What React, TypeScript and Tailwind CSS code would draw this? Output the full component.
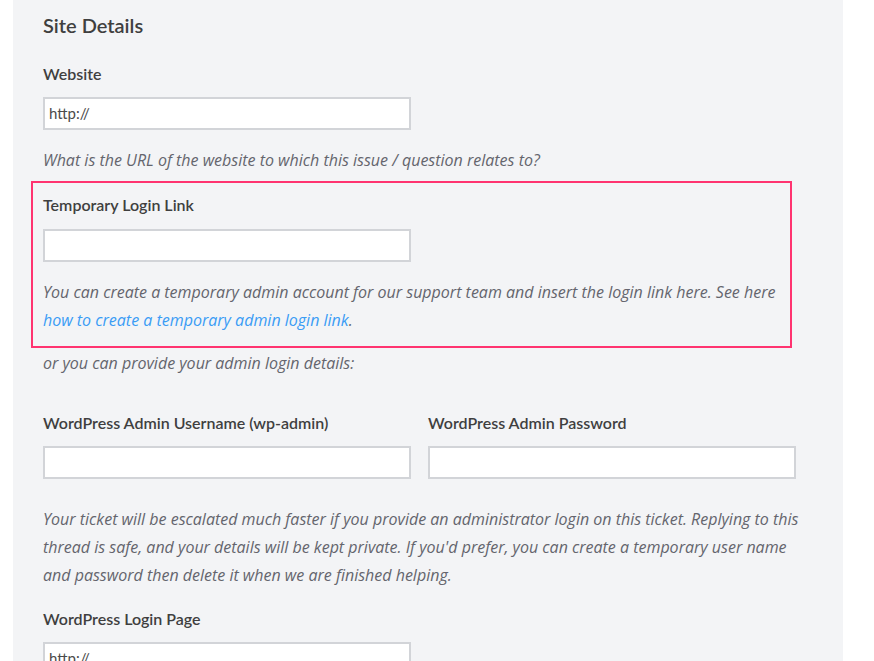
import React from "react";

const font = { fontFamily: "Lato, 'Open Sans', sans-serif" };
const helpFont = { fontFamily: "'Open Sans', Lato, sans-serif" };

function Input({ value }: { value?: string }) {
  return (
    <div className="h-[33px] w-[368px] border-2 border-[#d2d4d8] bg-white px-[4px] flex items-center text-[15px] text-[#4a4a4a]">
      {value}
    </div>
  );
}

function Label({ children }: { children: React.ReactNode }) {
  return <div className="text-[16px] leading-[20px] font-semibold text-[#3f3f3f]">{children}</div>;
}

function Help({ children, className = "" }: { children: React.ReactNode; className?: string }) {
  return (
    <p className={"text-[16px] leading-[28px] italic text-[#64656d] " + className} style={helpFont}>
      {children}
    </p>
  );
}

export default function App() {
  return (
    <div className="min-h-[661px] bg-white overflow-hidden" style={font}>
      <div className="ml-[13px] w-[830px] bg-[#f3f4f6] pl-[30px] pt-[13px] pb-[40px]">
        <div className="w-[753px]">
          <h2 className="text-[20px] leading-[24px] font-semibold text-[#3f3f3f]">Site Details</h2>
          <div className="mt-[27px]"><Label>Website</Label></div>
          <div className="mt-[13px]"><Input value="http://" /></div>
          <Help className="mt-[16px]">What is the URL of the website to which this issue / question relates to?</Help>
          <div className="mt-[7px] -ml-[12px] w-[761px] border-2 border-[#ff3370] pt-[12px] pb-[12px] pl-[10px] pr-[10px]">
            <Label>Temporary Login Link</Label>
            <div className="mt-[14px]"><Input /></div>
            <Help className="mt-[16px]">
              You can create a temporary admin account for our support team and insert the login link here. See here{" "}
              <a className="text-[#3a9cf5]">how to create a temporary admin login link</a>.
            </Help>
          </div>
          <Help className="mt-[1px]">or you can provide your admin login details:</Help>
          <div className="mt-[36px] grid grid-cols-[368px_368px] gap-x-[17px]">
            <Label>WordPress Admin Username (wp-admin)</Label>
            <Label>WordPress Admin Password</Label>
            <div className="mt-[13px]"><Input /></div>
            <div className="mt-[13px]"><Input /></div>
          </div>
          <Help className="mt-[26px] w-[765px]">
            Your ticket will be escalated much faster if you provide an administrator login on this ticket. Replying to this thread is safe, and your details will be kept private. If you'd prefer, you can create a temporary user name and password then delete it when we are finished helping.
          </Help>
          <div className="mt-[20px]"><Label>WordPress Login Page</Label></div>
          <div className="mt-[13px]"><Input value="http://" /></div>
        </div>
      </div>
    </div>
  );
}
